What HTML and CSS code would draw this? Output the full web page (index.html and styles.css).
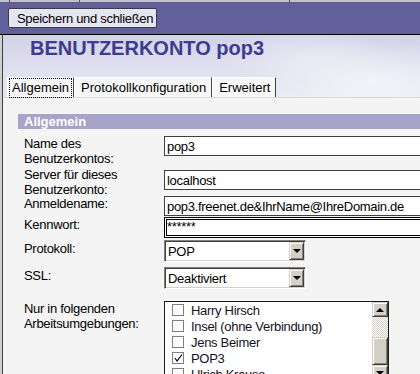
FILE: index.html
```html
<!DOCTYPE html>
<html lang="de">
<head>
    <meta charset="UTF-8">
    <title>Benutzerkonto pop3</title>
    <link rel="stylesheet" href="styles.css">
</head>
<body>
    <div class="top-strip">
        <span class="strip-cell cell-a"></span>
        <span class="strip-cell cell-b"></span>
        <span class="strip-cell cell-c"></span>
    </div>

    <div class="toolbar">
        <button class="save-btn">Speichern und schließen</button>
    </div>

    <div class="frame">
        <div class="header">
            <h1 class="title">BENUTZERKONTO pop3</h1>
            <div class="tabs">
                <div class="tab active"><span class="focus">Allgemein</span></div>
                <div class="tab">Protokollkonfiguration</div>
                <div class="tab">Erweitert</div>
            </div>
        </div>

        <div class="content">
            <div class="section-title">Allgemein</div>

            <div class="form">
                <label class="label">Name des Benutzerkontos:</label>
                <input class="field" type="text" value="pop3">

                <label class="label">Server für dieses Benutzerkonto:</label>
                <input class="field field-offset" type="text" value="localhost">

                <label class="label">Anmeldename:</label>
                <input class="field" type="text" value="pop3.freenet.de&amp;IhrName@IhreDomain.de">

                <label class="label">Kennwort:</label>
                <div class="field field-focus">******</div>

                <label class="label label-low">Protokoll:</label>
                <div class="combo">
                    <span class="combo-text">POP</span>
                    <span class="combo-btn"><span class="arrow-down"></span></span>
                </div>

                <label class="label label-low">SSL:</label>
                <div class="combo">
                    <span class="combo-text">Deaktiviert</span>
                    <span class="combo-btn"><span class="arrow-down"></span></span>
                </div>

                <label class="label label-list">Nur in folgenden Arbeitsumgebungen:</label>
                <div class="listbox">
                    <div class="items">
                        <div class="item"><span class="check"></span>Harry Hirsch</div>
                        <div class="item"><span class="check"></span>Insel (ohne Verbindung)</div>
                        <div class="item"><span class="check"></span>Jens Beimer</div>
                        <div class="item">
                            <span class="check">
                                <svg width="9" height="9" viewBox="0 0 9 9"><polyline points="1,4 3,7 8,0.5" fill="none" stroke="#000" stroke-width="1.2"/></svg>
                            </span>POP3
                        </div>
                        <div class="item"><span class="check"></span>Ulrich Krause</div>
                    </div>
                    <div class="scrollbar">
                        <div class="sb-btn"><span class="arrow-up"></span></div>
                        <div class="sb-track"></div>
                        <div class="sb-thumb"></div>
                        <div class="sb-btn"><span class="arrow-down"></span></div>
                    </div>
                </div>
            </div>
        </div>
    </div>
</body>
</html>
```

FILE: styles.css
```css
body {
    margin: 0;
    width: 420px;
    height: 374px;
    overflow: hidden;
    background-color: #cfcfcf;
    font-family: 'Liberation Sans', Arial, sans-serif;
    font-size: 13px;
    color: #000;
}

/* thin strip of the window above */
.top-strip {
    display: flex;
    height: 2px;
    background-color: #c2c2c2;
}

.strip-cell {
    border-right: 1px solid #555;
}

.cell-a { width: 9px; }
.cell-b { width: 69px; }
.cell-c { width: 209px; }

.toolbar {
    height: 26px;
    padding: 6px 8px 0;
    background-color: #62609a;
    border-bottom: 1px solid #000;
}

.save-btn {
    height: 20px;
    width: 149px;
    padding: 0 0 0 8px;
    text-align: left;
    font-family: inherit;
    font-size: 13px;
    letter-spacing: -0.3px;
    color: #000;
    background-color: #e6e6f2;
    border: 1px solid #3a3a4a;
    border-radius: 2px;
}

.frame {
    margin-left: 2px;
    border-left: 1px solid #404040;
    background-color: #f4f4f4;
    height: 340px;
}

.header {
    height: 62px;
    background:
        radial-gradient(ellipse 120px 40px at 370px 45px, rgba(255, 255, 255, 0.55), transparent),
        radial-gradient(ellipse 90px 30px at 300px 20px, rgba(255, 255, 255, 0.35), transparent),
        linear-gradient(180deg, #d2d2e8 0%, #dedeef 50%, #e9e9f3 100%);
}

.title {
    margin: 0;
    padding: 1px 0 0 27px;
    height: 24px;
    line-height: 24px;
    font-size: 20px;
    font-weight: bold;
    color: #3c3c8e;
}

.tabs {
    display: flex;
    margin-top: 17px;
    padding-left: 4px;
}

.tab {
    height: 19px;
    line-height: 19px;
    padding: 0 5px 0 6px;
    background-color: #f7f7f7;
    border-top: 1px solid #fff;
    border-left: 1px solid #fff;
    border-right: 1px solid #404040;
}

.tab.active {
    padding: 0 2px;
}

.focus {
    display: inline-block;
    height: 18px;
    line-height: 18px;
    padding: 0 2px 0 2px;
    outline: 1px dotted #000;
}

.content {
    border-top: 1px solid #dadada;
    padding: 16px 0 0 15px;
}

.section-title {
    height: 15px;
    line-height: 15px;
    padding-left: 6px;
    background-color: #a7a3c9;
    color: #fff;
    font-weight: bold;
}

.form {
    display: grid;
    grid-template-columns: 140px 1fr;
    grid-template-rows: 31px 29px 21px 23px 27px 33px auto;
    margin-top: 7px;
    padding-left: 6px;
}

.label {
    width: 134px;
    line-height: 15px;
    letter-spacing: -0.3px;
}

.label-low {
    padding-top: 1px;
}

.label-list {
    padding-top: 1px;
}

.field {
    box-sizing: border-box;
    width: 300px;
    height: 20px;
    margin: 0;
    padding: 0 2px;
    border: 1px solid #404040;
    background-color: #fff;
    font-family: inherit;
    font-size: 13px;
    letter-spacing: -0.3px;
    color: #000;
    outline: none;
}

.field-offset {
    margin-top: 3px;
}

.field-focus {
    height: 21px;
    padding: 0 0 0 0;
    border: 3px double #000;
    line-height: 13px;
}

.combo {
    box-sizing: border-box;
    display: flex;
    width: 142px;
    height: 22px;
    background-color: #fff;
    border: 1px solid;
    border-color: #808080 #fff #fff #808080;
    box-shadow: inset 1px 1px #404040, inset -1px -1px #d4d0c8;
    padding: 1px;
}

.combo-text {
    flex: 1;
    line-height: 19px;
    padding-left: 2px;
    letter-spacing: -0.3px;
}

.combo-btn {
    box-sizing: border-box;
    display: flex;
    align-items: center;
    justify-content: center;
    width: 15px;
    height: 18px;
    background-color: #d4d0c8;
    border: 1px solid;
    border-color: #d4d0c8 #404040 #404040 #d4d0c8;
    box-shadow: inset 1px 1px #fff, inset -1px -1px #808080;
}

.arrow-down {
    width: 0;
    height: 0;
    border-left: 4px solid transparent;
    border-right: 4px solid transparent;
    border-top: 4px solid #000;
}

.arrow-up {
    width: 0;
    height: 0;
    border-left: 4px solid transparent;
    border-right: 4px solid transparent;
    border-bottom: 4px solid #000;
}

.listbox {
    display: flex;
    box-sizing: border-box;
    width: 225px;
    height: 100px;
    margin-top: 1px;
    background-color: #fff;
    border: 1px solid #1c1c1c;
}

.items {
    flex: 1;
    padding-left: 7px;
}

.item {
    display: flex;
    align-items: center;
    gap: 7px;
    height: 16px;
    letter-spacing: -0.3px;
    color: #16101e;
}

.check {
    box-sizing: border-box;
    display: flex;
    align-items: center;
    justify-content: center;
    width: 12px;
    height: 12px;
    border: 1px solid #7f7f7f;
    background-color: #fff;
}

.scrollbar {
    width: 16px;
    display: flex;
    flex-direction: column;
}

.sb-btn,
.sb-thumb {
    box-sizing: border-box;
    background-color: #d4d0c8;
    border: 1px solid;
    border-color: #d4d0c8 #404040 #404040 #d4d0c8;
    box-shadow: inset 1px 1px #fff, inset -1px -1px #808080;
}

.sb-btn {
    display: flex;
    align-items: center;
    justify-content: center;
    height: 15px;
}

.sb-track {
    height: 20px;
    background-color: #fff;
    background-image: conic-gradient(#d4d0c8 25%, #fff 0 50%, #d4d0c8 0 75%, #fff 0);
    background-size: 2px 2px;
}

.sb-thumb {
    height: 28px;
}
```
